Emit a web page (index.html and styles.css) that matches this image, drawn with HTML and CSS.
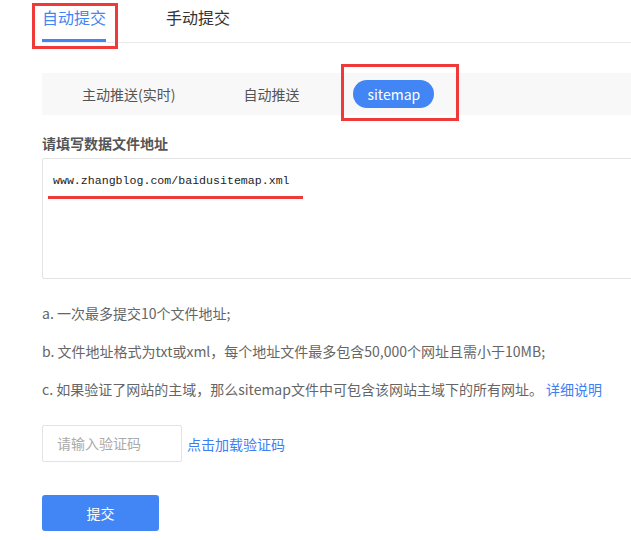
FILE: index.html
```html
<!DOCTYPE html>
<html lang="zh-CN">
<head>
<meta charset="utf-8">
<title>sitemap 提交</title>
<link rel="stylesheet" href="styles.css">
</head>
<body>
<div class="page">
  <div class="tabs">
    <div class="tab tab-active">自动提交</div>
    <div class="tab">手动提交</div>
  </div>

  <div class="subtabs">
    <div class="subtab">主动推送(实时)</div>
    <div class="subtab">自动推送</div>
    <div class="subtab subtab-active">sitemap</div>
  </div>

  <div class="label">请填写数据文件地址</div>
  <div class="textarea">www.zhangblog.com/baidusitemap.xml</div>

  <div class="notes">
    <p class="note">a. 一次最多提交10个文件地址;</p>
    <p class="note">b. 文件地址格式为txt或xml，每个地址文件最多包含50,000个网址且需小于10MB;</p>
    <p class="note">c. 如果验证了网站的主域，那么sitemap文件中可包含该网站主域下的所有网址。 <a class="link" href="#">详细说明</a></p>
  </div>

  <div class="captcha">
    <div class="captcha-input">请输入验证码</div>
    <a class="link captcha-link" href="#">点击加载验证码</a>
  </div>

  <button class="submit" type="button">提交</button>

  <div class="mark mark-tab"></div>
  <div class="mark mark-sitemap"></div>
  <div class="mark-line"></div>
</div>
</body>
</html>
```

FILE: styles.css
```css
* { box-sizing: border-box; }

html, body {
  margin: 0;
  padding: 0;
  background: #ffffff;
}

body {
  font-family: "Noto Sans CJK SC", "Noto Sans", sans-serif;
  color: #333;
  overflow: hidden;
}

.page {
  position: relative;
  width: 631px;
  height: 540px;
  padding-left: 42px;
}

.tabs {
  display: flex;
  gap: 60px;
  border-bottom: 1px solid #ececec;
  width: 620px;
}

.tab {
  height: 42px;
  padding-top: 5px;
  font-size: 16px;
  line-height: 24px;
  color: #333;
  border-bottom: 3px solid transparent;
}

.tab-active {
  color: #4285f4;
  border-bottom-color: #4285f4;
}

.subtabs {
  margin-top: 30px;
  height: 42px;
  width: 620px;
  background: #f8f8f8;
  display: flex;
  align-items: center;
  gap: 40px;
  padding-left: 26px;
}

.subtab {
  height: 28px;
  line-height: 28px;
  padding: 0 14px;
  border-radius: 14px;
  font-size: 14px;
  color: #555;
}

.subtab-active {
  background: #4285f4;
  color: #fff;
}

.label {
  margin-top: 18px;
  font-size: 14px;
  line-height: 20px;
  font-weight: bold;
  color: #555;
}

.textarea {
  margin-top: 5px;
  height: 121px;
  width: 620px;
  border: 1px solid #e3e3e3;
  border-radius: 2px;
  padding: 13px 10px;
  font-family: "Liberation Mono", "DejaVu Sans Mono", monospace;
  font-size: 11.6px;
  line-height: 18px;
  color: #222;
}

.notes {
  margin-top: 23px;
}

.note {
  margin: 0 0 16px;
  font-size: 14px;
  line-height: 22px;
  color: #666;
  white-space: nowrap;
}

.link {
  color: #3d7ef5;
  text-decoration: none;
}

.captcha {
  margin-top: 25px;
  display: flex;
  align-items: center;
  gap: 5px;
}

.captcha-input {
  width: 140px;
  height: 37px;
  border: 1px solid #e3e3e3;
  border-radius: 2px;
  padding-left: 14px;
  font-size: 14px;
  line-height: 35px;
  color: #aaa;
}

.captcha-link {
  font-size: 14px;
}

.submit {
  display: block;
  margin-top: 33px;
  width: 117px;
  height: 36px;
  border: none;
  border-radius: 3px;
  background: #4285f4;
  color: #fff;
  font-family: inherit;
  font-size: 14px;
  padding: 0;
}

.mark {
  position: absolute;
  border: 3px solid #f03a3a;
}

.mark-tab {
  left: 32px;
  top: 3px;
  width: 86px;
  height: 46px;
}

.mark-sitemap {
  left: 341px;
  top: 64px;
  width: 118px;
  height: 57px;
}

.mark-line {
  position: absolute;
  left: 48px;
  top: 196px;
  width: 255px;
  height: 3px;
  background: #f03a3a;
}
```
